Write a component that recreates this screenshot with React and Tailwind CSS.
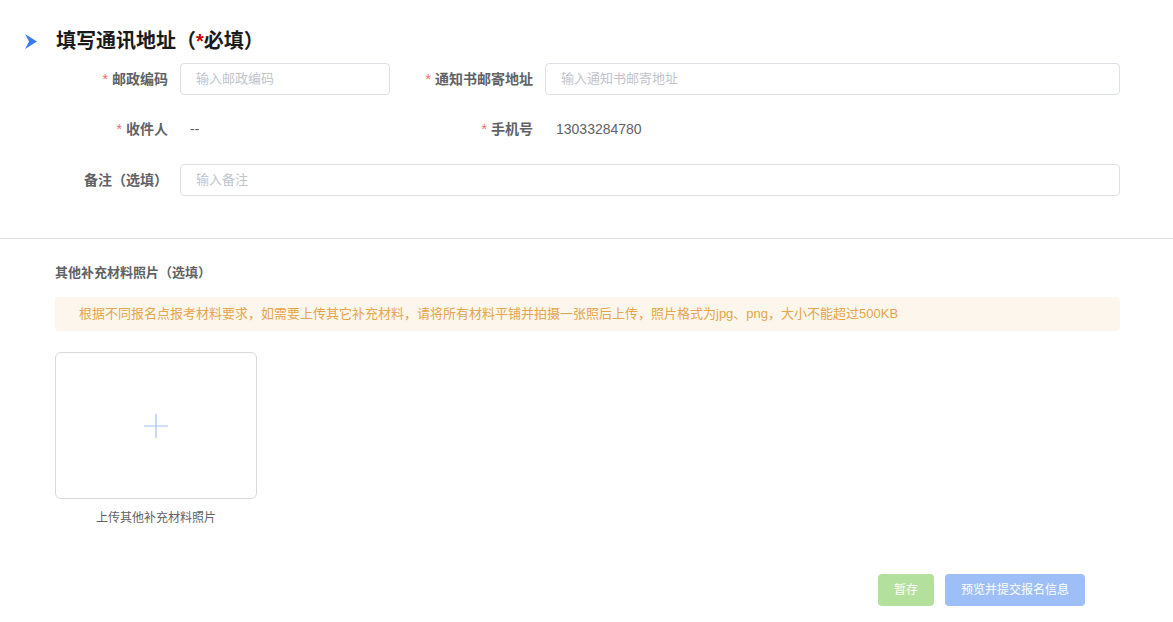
import React from "react";

const font = { fontFamily: '"Liberation Sans", "Noto Sans CJK SC", sans-serif' };

const Label = ({ children, required, w = "w-[120px]" }) => (
    <div className={`${w} shrink-0 pr-[12px] text-right text-[14px] font-bold text-[#606266] leading-[32px]`}>
        {required && <span className="text-[#f56c6c] mr-[4px] font-normal">*</span>}
        {children}
    </div>
);

const Input = ({ placeholder, className = "" }) => (
    <input
        className={`h-[32px] border border-[#dcdfe6] rounded-[4px] px-[15px] pb-[2px] text-[13px] text-[#606266] placeholder:text-[#c0c4cc] outline-none ${className}`}
        placeholder={placeholder}
    />
);

const App = () => {
    return (
        <div className="w-[1173px] min-h-[622px] bg-white" style={font}>
            <div className="flex items-center pt-[29px] pl-[25px] h-[53px]">
                <svg width="12" height="15" viewBox="0 0 12 15">
                    <polygon points="0,0 12,7.5 0,15 4,7.5" fill="#3b7cf0" />
                </svg>
                <h2 className="ml-[19px] text-[20px] font-bold text-[#1a1a1a] leading-[24px]">
                    填写通讯地址（<span className="text-[#c00]">*</span>必填）
                </h2>
            </div>

            <div className="pl-[60px] pr-[53px] mt-[10px]">
                <div className="flex">
                    <div className="flex w-[365px]">
                        <Label required>邮政编码</Label>
                        <Input placeholder="输入邮政编码" className="w-[210px]" />
                    </div>
                    <div className="flex flex-1">
                        <Label required>通知书邮寄地址</Label>
                        <Input placeholder="输入通知书邮寄地址" className="flex-1" />
                    </div>
                </div>

                <div className="flex mt-[18px]">
                    <div className="flex w-[365px]">
                        <Label required>收件人</Label>
                        <div className="pl-[10px] text-[14px] text-[#606266] leading-[32px]">--</div>
                    </div>
                    <div className="flex flex-1">
                        <Label required>手机号</Label>
                        <div className="pl-[11px] text-[14px] text-[#606266] leading-[32px]">13033284780</div>
                    </div>
                </div>

                <div className="flex mt-[19px]">
                    <Label>备注（选填）</Label>
                    <Input placeholder="输入备注" className="flex-1" />
                </div>
            </div>

            <div className="mt-[42px] h-px bg-[#e0e0e0]"></div>

            <div className="pl-[55px] pr-[53px]">
                <div className="mt-[25px] text-[13px] font-bold text-[#606266] leading-[18px]">
                    其他补充材料照片（选填）
                </div>
                <div className="mt-[15px] h-[34px] bg-[#fdf6ec] rounded-[4px] pl-[24px] flex items-center text-[13px] text-[#e8a44a]">
                    根据不同报名点报考材料要求，如需要上传其它补充材料，请将所有材料平铺并拍摄一张照后上传，照片格式为jpg、png，大小不能超过500KB
                </div>

                <div className="mt-[21px] w-[202px] flex flex-col items-center">
                    <div className="w-[202px] h-[147px] border border-[#d9d9d9] rounded-[6px] flex items-center justify-center cursor-pointer">
                        <svg width="24" height="24" viewBox="0 0 24 24">
                            <path d="M12 0v24M0 12h24" stroke="#a6c0f5" strokeWidth="1.2" />
                        </svg>
                    </div>
                    <div className="mt-[11px] text-[12px] text-[#606266] leading-[16px]">上传其他补充材料照片</div>
                </div>

                <div className="flex justify-end gap-[11px] mt-[48px] pr-[35px]">
                    <button className="w-[56px] h-[32px] rounded-[4px] bg-[#b3e19d] text-white text-[12px]">暂存</button>
                    <button className="w-[140px] h-[32px] rounded-[4px] bg-[#9ebef8] text-white text-[12px]">预览并提交报名信息</button>
                </div>
            </div>
        </div>
    );
};

export default App;
